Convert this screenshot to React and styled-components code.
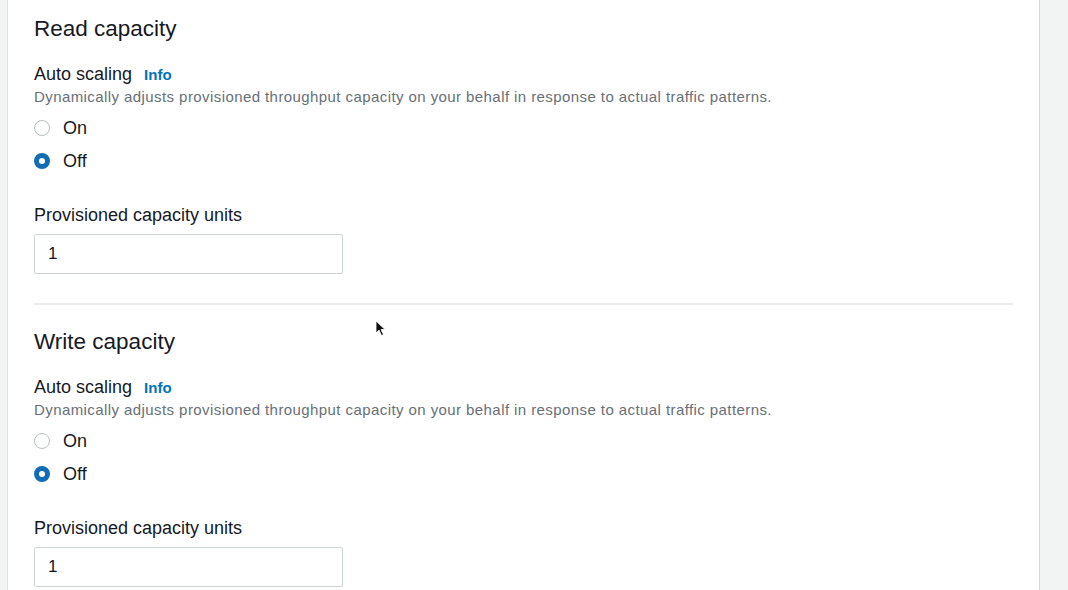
import React from "react";
import styled, { createGlobalStyle } from "styled-components";

const Global = createGlobalStyle`
  html, body { margin: 0; padding: 0; background: #f2f3f3; }
  body { font-family: "Liberation Sans", Arial, sans-serif; color: #16191f; overflow: hidden; }
  * { box-sizing: border-box; }
`;

const Page = styled.div`
  position: relative;
  height: 590px;
  overflow: hidden;
`;

const Card = styled.div`
  margin-left: 7px;
  width: 1033px;
  min-height: 590px;
  background: #ffffff;
  border-left: 1px solid #dfe2e2;
  border-right: 1px solid #d5d9d9;
  padding: 15px 26px 0 26px;
`;

const Section = styled.section`
  display: flex;
  flex-direction: column;
  margin-top: ${(p) => p.$mt || 0}px;
`;

const Heading = styled.h2`
  margin: 0;
  font-size: 22.5px;
  line-height: 28px;
  font-weight: 400;
  color: #16191f;
`;

const LabelRow = styled.div`
  display: flex;
  align-items: baseline;
  gap: 12px;
  margin-top: ${(p) => p.$mt || 0}px;
  font-size: 18px;
  line-height: 24px;
  color: #16191f;
`;

const InfoLink = styled.span`
  font-size: 15px;
  font-weight: 700;
  color: #0073bb;
`;

const Description = styled.div`
  font-size: 15px;
  letter-spacing: 0.42px;
  line-height: 20px;
  color: #687078;
`;

const RadioGroup = styled.div`
  display: flex;
  flex-direction: column;
  gap: 9px;
  margin-top: 9px;
`;

const RadioRow = styled.label`
  display: flex;
  align-items: center;
  gap: 13px;
  height: 24px;
  font-size: 18px;
  color: #16191f;
`;

const RadioDot = styled.span`
  width: 16px;
  height: 16px;
  border-radius: 50%;
  flex: none;
  background: #fff;
  border: ${(p) => (p.$checked ? "5.5px solid #0f6cb5" : "1.5px solid #b8c0c0")};
`;

const Input = styled.div`
  margin-top: 7px;
  width: 309px;
  height: 40px;
  border: 1px solid #cfd4d4;
  border-radius: 2px;
  display: flex;
  align-items: center;
  padding-left: 13px;
  font-size: 17px;
  color: #16191f;
`;

const Divider = styled.hr`
  margin: 29px 0 0 0;
  border: none;
  border-top: 2px solid #eaeded;
`;

const CursorMark = styled.svg`
  position: absolute;
  left: 375px;
  top: 320px;
`;

function CapacitySection({ title, mt }) {
  return (
    <Section $mt={mt}>
      <Heading>{title}</Heading>
      <LabelRow $mt={19}>
        Auto scaling <InfoLink>Info</InfoLink>
      </LabelRow>
      <Description>
        Dynamically adjusts provisioned throughput capacity on your behalf in response to actual traffic patterns.
      </Description>
      <RadioGroup>
        <RadioRow>
          <RadioDot />
          On
        </RadioRow>
        <RadioRow>
          <RadioDot $checked />
          Off
        </RadioRow>
      </RadioGroup>
      <LabelRow $mt={30}>Provisioned capacity units</LabelRow>
      <Input>1</Input>
    </Section>
  );
}

export default function App() {
  return (
    <Page>
      <Global />
      <Card>
        <CapacitySection title="Read capacity" />
        <Divider />
        <CapacitySection title="Write capacity" mt={23} />
      </Card>
      <CursorMark width="12" height="18" viewBox="0 0 12 18">
        <path d="M1 1 L1 13 L4 10 L6.5 15.5 L8.5 14.5 L6 9.5 L10 9.5 Z" fill="#111" stroke="#fff" strokeWidth="0.8" />
      </CursorMark>
    </Page>
  );
}
